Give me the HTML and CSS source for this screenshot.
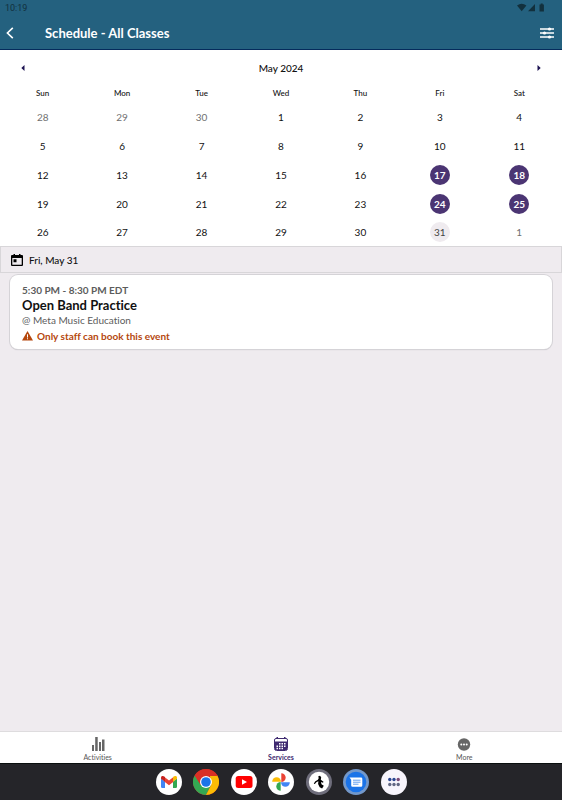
FILE: index.html
```html
<!DOCTYPE html>
<html lang="en">
<head>
<meta charset="utf-8">
<meta name="viewport" content="width=device-width, initial-scale=1">
<title>Schedule - All Classes</title>
<link rel="stylesheet" href="styles.css">
</head>
<body>
<header class="top">
  <div class="status">
    <time>10:19</time>
    <svg width="30" height="10" viewBox="0 0 30 10" fill="#12303d" aria-hidden="true">
      <path d="M0 2.6Q4.700-1 9.400 2.600L4.700 8.200Z"/>
      <path d="M11 8.200 18 1v7.200Z"/>
      <path d="M22.500 1.600h1.200V.6h2v1h1.200v7h-4.400Z"/>
    </svg>
  </div>
  <div class="bar">
    <button class="icon-btn" aria-label="Back">
      <svg width="8" height="12" viewBox="0 0 8 12" fill="none" stroke="#fff" stroke-width="1.600"><path d="M6.800.8 1.400 6l5.400 5.200"/></svg>
    </button>
    <h1>Schedule - All Classes</h1>
    <button class="icon-btn" aria-label="Filters">
      <svg width="14" height="12" viewBox="0 0 14 12" fill="#fff"><path d="M0 1.300h14v1.400H0zM0 5.300h14v1.400H0zM0 9.300h14v1.400H0z"/><circle cx="9.500" cy="2" r="1.600"/><circle cx="4.500" cy="6" r="1.600"/><circle cx="9.500" cy="10" r="1.600"/></svg>
    </button>
  </div>
</header>
<main>
  <section class="calendar">
    <div class="month">
      <button class="icon-btn" aria-label="Previous month"><svg width="4" height="6" viewBox="0 0 4 6" fill="#1d1352"><path d="M3.500 0v6L.3 3Z"/></svg></button>
      <h2>May 2024</h2>
      <button class="icon-btn" aria-label="Next month"><svg width="4" height="6" viewBox="0 0 4 6" fill="#1d1352"><path d="M.5 0v6L3.700 3Z"/></svg></button>
    </div>
    <table>
      <thead><tr><th>Sun</th><th>Mon</th><th>Tue</th><th>Wed</th><th>Thu</th><th>Fri</th><th>Sat</th></tr></thead>
      <tbody>
        <tr><td><button class="day out">28</button></td><td><button class="day out">29</button></td><td><button class="day out">30</button></td><td><button class="day">1</button></td><td><button class="day">2</button></td><td><button class="day">3</button></td><td><button class="day">4</button></td></tr>
        <tr><td><button class="day">5</button></td><td><button class="day">6</button></td><td><button class="day">7</button></td><td><button class="day">8</button></td><td><button class="day">9</button></td><td><button class="day">10</button></td><td><button class="day">11</button></td></tr>
        <tr><td><button class="day">12</button></td><td><button class="day">13</button></td><td><button class="day">14</button></td><td><button class="day">15</button></td><td><button class="day">16</button></td><td><button class="day booked">17</button></td><td><button class="day booked">18</button></td></tr>
        <tr><td><button class="day">19</button></td><td><button class="day">20</button></td><td><button class="day">21</button></td><td><button class="day">22</button></td><td><button class="day">23</button></td><td><button class="day booked">24</button></td><td><button class="day booked">25</button></td></tr>
        <tr><td><button class="day">26</button></td><td><button class="day">27</button></td><td><button class="day">28</button></td><td><button class="day">29</button></td><td><button class="day">30</button></td><td><button class="day selected">31</button></td><td><button class="day out">1</button></td></tr>
      </tbody>
    </table>
  </section>
  <h2 class="date">
    <svg width="12" height="12" viewBox="0 0 12 12" aria-hidden="true"><path fill="#000" fill-rule="evenodd" d="M1 1h1.500V0H4v1h4V0h1.500v1H11a1 1 0 0 1 1 1v9a1 1 0 0 1-1 1H1a1 1 0 0 1-1-1V2a1 1 0 0 1 1-1ZM1.300 4v6.700h9.400V4ZM2.500 5.300h3v3h-3Z"/></svg>
    Fri, May 31
  </h2>
  <article class="card">
    <p class="time">5:30 PM - 8:30 PM EDT</p>
    <h3>Open Band Practice</h3>
    <p class="place">@ Meta Music Education</p>
    <p class="warn">
      <svg width="11" height="10" viewBox="0 0 11 10" aria-hidden="true"><path fill="#b5470d" d="M5.500 0 11 9.600H0Z"/><path fill="#fff" d="M5 3.300h1v3.200H5zM5 7.300h1v1H5z"/></svg>
      Only staff can book this event
    </p>
  </article>
</main>
<nav class="tabs">
  <a href="#activities">
    <svg width="14" height="14" viewBox="0 0 14 14" fill="#666"><path d="M1 8h2v6H1zM4.200 0h2.500v14H4.200zM8 5h2v9H8zM11 2.500h2.500V14H11z"/></svg>
    Activities
  </a>
  <a href="#services" class="active">
    <svg width="14" height="14" viewBox="0 0 14 14"><path fill="none" stroke="#3f2a70" d="M2 1.500h10q1.500 0 1.500 1.500v8.500q0 2-2 2h-9q-2 0-2-2V3Q.5 1.500 2 1.500Z"/><path fill="#3f2a70" d="M2.500 0H4v2H2.500zM10 0h1.500v2H10zM1 4.500h12V13H1z"/><path stroke="#fff" stroke-width="1.500" stroke-dasharray="1.500 1" d="M5 6.800h7M2.500 9.200h9.500M2.500 11.500h7"/></svg>
    Services
  </a>
  <a href="#more">
    <svg width="14" height="14" viewBox="0 0 14 14"><circle cx="7" cy="7.500" r="6.200" fill="#666"/><g fill="#fff"><circle cx="4.300" cy="7.500" r="1"/><circle cx="7" cy="7.500" r="1"/><circle cx="9.700" cy="7.500" r="1"/></g></svg>
    More
  </a>
</nav>
<footer class="dock">
  <div class="apps">
  <button aria-label="Gmail"><svg viewBox="0 0 26 26"><circle cx="13" cy="13" r="13" fill="#fff"/><path fill="#4285f4" d="M5 9.500l4 3V19H6.200Q5 19 5 17.800Z"/><path fill="#34a853" d="M21 9.500l-4 3V19h2.800q1.200 0 1.200-1.200Z"/><path fill="#ea4335" d="M8.500 8 13 11.500 17.500 8v4.800L13 16.200l-4.500-3.400Z"/><path fill="#c5221f" d="M5 8.700C5 6.800 7 6.300 9 8v4.800l-4-3Z"/><path fill="#fbbc04" d="M21 8.700c0-1.900-2-2.400-4-.7v4.800l4-3Z"/></svg></button>
  <button aria-label="Chrome"><svg viewBox="0 0 26 26"><circle cx="13" cy="13" r="13" fill="#d93025"/><path fill="#34a853" d="M1.740 6.500A13 13 0 0 0 13 26l5.200-10L13 13l-5.200 3Z"/><path fill="#fbbc04" d="M24.260 6.500A13 13 0 0 1 13 26l5.200-10L17 7Z"/><path fill="#d93025" d="M1.740 6.500A13 13 0 0 1 24.260 6.500L24.500 7H13L7.800 16Z"/><circle cx="13" cy="13" r="6" fill="#fff"/><circle cx="13" cy="13" r="4.800" fill="#1a73e8"/></svg></button>
  <button aria-label="YouTube"><svg viewBox="0 0 26 26"><circle cx="13" cy="13" r="13" fill="#fff"/><rect x="4.700" y="7" width="16.800" height="12" rx="2.500" fill="#f00"/><path fill="#fff" d="m11 10.300 5 2.700-5 2.700Z"/></svg></button>
  <button aria-label="Photos"><svg viewBox="0 0 26 26"><circle cx="13" cy="13" r="13" fill="#fff"/><path fill="#ea4335" d="M13.300 4.200a4.400 4.400 0 0 1 0 8.800Z"/><path fill="#4285f4" d="M21.800 13.300a4.400 4.400 0 0 1-8.800 0Z"/><path fill="#34a853" d="M12.700 21.800a4.400 4.400 0 0 1 0-8.800Z"/><path fill="#fbbc04" d="M4.200 12.700a4.400 4.400 0 0 1 8.800 0Z"/></svg></button>
  <button aria-label="Music studio"><svg viewBox="0 0 26 26"><circle cx="13" cy="13" r="13" fill="#6f6e7c"/><circle cx="13" cy="13" r="10.200" fill="#fff"/><path fill="#000" d="M12.300 7.300 14 6.800l1.200 1.400-.4 2.600 2.700 1.900-.5 1-2-.8.500 2.300 2.300 1.600-1.700 2.600-2.400-1.200-1.600-3.200.3-2.800-1.800.8-1.800 2-1-.3 1.300-2.200 2.800-1.700.8-1.500Z"/></svg></button>
  <button aria-label="Messages"><svg viewBox="0 0 26 26"><circle cx="13" cy="13" r="13" fill="#7398ca"/><circle cx="13" cy="13" r="10.300" fill="#1a73e8"/><path fill="#fff" d="M6.500 8.500H18q1.300 0 1.300 1.300v6.700q0 1.300-1.300 1.300H9.500q-1.300 0-1.300-1.300V10.700Z"/><path stroke="#5e9cf0" stroke-width="1" d="M10 11.200h7.500M10 13.200h7.500M10 15.200h5.500"/></svg></button>
  <button aria-label="All apps"><svg viewBox="0 0 26 26"><circle cx="13" cy="13" r="13" fill="#f8f5fc"/><g fill="#2c4791"><circle cx="8.800" cy="10.500" r="1.700"/><circle cx="13" cy="10.500" r="1.700"/></g><circle cx="17.200" cy="10.500" r="1.700" fill="#7b4a78"/><g fill="#626783"><circle cx="8.800" cy="15.500" r="1.700"/><circle cx="13" cy="15.500" r="1.700"/><circle cx="17.200" cy="15.500" r="1.700"/></g></svg></button>
  </div>
</footer>
</body>
</html>
```

FILE: styles.css
```css
* {
  box-sizing: border-box;
}

body {
  margin: 0;
  min-height: 100vh;
  display: flex;
  flex-direction: column;
  background: #efebef;
  color: #111;
  font-family: Lato, "Open Sans", sans-serif;
  font-size: 10px;
  font-variant-ligatures: none;
  line-height: 12px;
}

h1, h2, h3, p {
  margin: 0;
}

button {
  padding: 0;
  border: 0;
  background: none;
  color: inherit;
  font: inherit;
}

svg {
  display: block;
  flex: none;
}

.top {
  background: #24617f;
  border-bottom: 1px solid #052b5c;
}

.status {
  display: flex;
  align-items: center;
  justify-content: space-between;
  height: 16px;
  padding: 0 15px 0 5px;
  color: #12303d;
  font-family: Roboto, sans-serif;
  font-size: 9px;
}

.bar {
  display: flex;
  align-items: center;
  height: 33px;
  padding: 0 8px 0 6px;
  color: #fff;
}

.bar h1 {
  flex: 1;
  margin-left: 31px;
  font-size: 13px;
  line-height: 16px;
}

.calendar {
  padding: 0 3px;
  background: #fff;
}

.month {
  display: flex;
  align-items: center;
  justify-content: space-between;
  height: 34px;
  padding: 2px 18px 0;
}

.month h2 {
  font-size: 10px;
  font-weight: 500;
}

table {
  width: 100%;
  table-layout: fixed;
  border-collapse: collapse;
}

th, td {
  padding: 0;
  text-align: center;
  vertical-align: middle;
}

th {
  height: 18px;
  font-size: 8px;
  font-weight: 500;
}

td {
  height: 29px;
}

tr:last-child td {
  height: 28px;
}

.day {
  display: block;
  width: 20px;
  height: 20px;
  margin: 0 auto;
  border-radius: 50%;
}

.out {
  color: #707070;
}

.booked {
  background: #4b3573;
  color: #fff;
  font-weight: 700;
}

.selected {
  background: #efebef;
  color: #444;
}

.date {
  display: flex;
  align-items: center;
  gap: 6px;
  height: 27px;
  padding: 0 10px;
  border: 1px solid #d8d6d9;
  font-size: 10px;
  font-weight: 500;
}

.card {
  margin: 2px 10px;
  padding: 9px 12px 7px;
  border-radius: 8px;
  background: #fff;
  box-shadow: 0 0 0 1px #d5d3d7, 0 1px 1px #bdbbc0;
}

.time, .place {
  color: #5c5c5c;
}

.time {
  font-weight: 700;
}

.card h3 {
  margin: 1px 0;
  font-size: 13px;
  line-height: 16px;
}

.warn {
  display: flex;
  align-items: center;
  gap: 4px;
  margin-top: 4px;
  color: #b5470d;
  font-weight: 700;
}

.tabs {
  display: grid;
  grid-template-columns: repeat(3, 1fr);
  margin-top: auto;
  padding: 0 6px;
  border-top: 1px solid #dedcde;
  background: #fff;
}

.tabs a {
  display: flex;
  flex-direction: column;
  align-items: center;
  gap: 2px;
  padding: 5px 0 1px;
  color: #555;
  font-size: 7px;
  line-height: 9px;
  text-decoration: none;
}

.tabs .active {
  color: #3f2a70;
  font-weight: 700;
}

.dock {
  padding: 5px;
  border-top: 1px solid #0a0f0e;
  background: #252529;
}

.apps {
  display: flex;
  justify-content: space-between;
  max-width: 251px;
  margin: 0 auto;
}

.apps svg {
  width: 26px;
  height: 26px;
}
```
